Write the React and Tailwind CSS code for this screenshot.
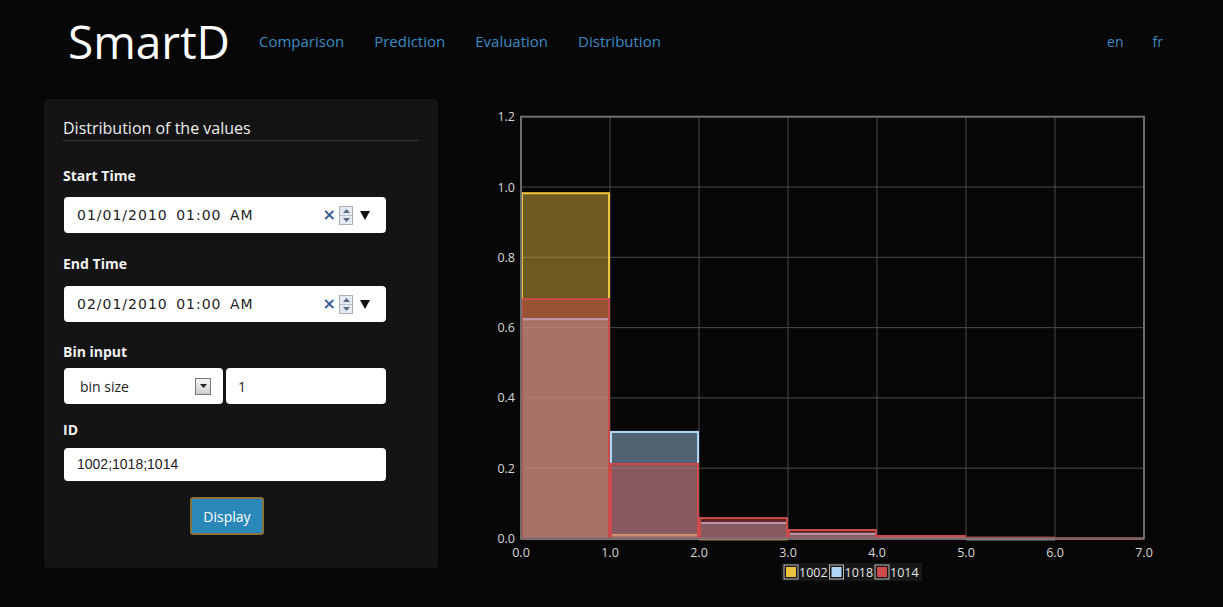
import React from "react";

const X0 = 521;
const UX = 89;
const Y0 = 538.5;
const UY = 351.5;
const xp = (v) => X0 + UX * v;
const yp = (v) => Y0 - UY * v;

const series = [
  { label: "1002", color: "#edc240", fill: "rgba(237,194,64,0.45)", data: [0.985, 0.013, 0.002, 0, 0, 0, 0] },
  { label: "1018", color: "#afd8f8", fill: "rgba(175,216,248,0.45)", data: [0.627, 0.306, 0.047, 0.016, 0.006, 0.002, 0] },
  { label: "1014", color: "#cb4b4b", fill: "rgba(203,75,75,0.45)", data: [0.684, 0.215, 0.061, 0.027, 0.01, 0.005, 0.003] },
];

function Chart() {
  const yTicks = [0, 0.2, 0.4, 0.6, 0.8, 1.0, 1.2];
  const xTicks = [0, 1, 2, 3, 4, 5, 6, 7];
  return (
    <svg width="700" height="490" viewBox="480 100 700 490" className="block" style={{ fontFamily: '"Open Sans", sans-serif' }}>
      {yTicks.slice(1, -1).map((t) => (
        <line key={"gy" + t} x1={X0} x2={xp(7)} y1={yp(t)} y2={yp(t)} stroke="#4a4a4a" strokeWidth="1" />
      ))}
      {xTicks.slice(1, -1).map((t) => (
        <line key={"gx" + t} x1={xp(t)} x2={xp(t)} y1={yp(1.2)} y2={Y0} stroke="#4a4a4a" strokeWidth="1" />
      ))}
      {series.map((s) =>
        s.data.map((v, i) =>
          v > 0 ? (
            <g key={s.label + i}>
              <rect x={xp(i)} y={yp(v)} width={UX} height={Y0 - yp(v)} fill={s.fill} />
              <rect x={xp(i) + 1} y={yp(v) + 1} width={UX - 2} height={Math.max(Y0 - yp(v) - 1, 0.5)} fill="none" stroke={s.color} strokeWidth="2" />
            </g>
          ) : null
        )
      )}
      <rect x={X0} y={yp(1.2)} width={UX * 7} height={UY * 1.2} fill="none" stroke="#6e6e6e" strokeWidth="2" />
      {yTicks.map((t) => (
        <text key={"ly" + t} x="515" y={yp(t) + 4.5} textAnchor="end" fontSize="12.5" fill="#d8d8d8">
          {t.toFixed(1)}
        </text>
      ))}
      {xTicks.map((t) => (
        <text key={"lx" + t} x={xp(t)} y="557" textAnchor="middle" fontSize="12.5" fill="#d8d8d8">
          {t.toFixed(1)}
        </text>
      ))}
      <rect x="781" y="563" width="141" height="18" fill="#1a1a1a" opacity="0.85" />
      {series.map((s, i) => {
        const bx = 784 + i * 45.5;
        return (
          <g key={"lg" + s.label}>
            <rect x={bx} y="565" width="14" height="14" fill="none" stroke="#bbbbbb" strokeWidth="1" />
            <rect x={bx + 2} y="567" width="10" height="10" fill={s.color} />
            <text x={bx + 15} y="576.5" fontSize="12.5" fill="#e4e4e4">
              {s.label}
            </text>
          </g>
        );
      })}
    </svg>
  );
}

function DateInput({ value }) {
  return (
    <div className="ml-px flex h-[36px] w-[322px] items-center rounded-[4px] bg-white pl-[13px] pr-[16px]">
      <span className="flex-1 text-[14px] tracking-[1px] text-[#222]" style={{ fontFamily: '"DejaVu Sans", sans-serif', wordSpacing: "3px" }}>
        {value}
      </span>
      <span className="text-[16px] font-bold leading-none text-[#3a5d8f]" style={{ fontFamily: '"DejaVu Sans", sans-serif' }}>
        ×
      </span>
      <span className="ml-[3px] flex h-[19px] w-[14px] flex-col border border-[#a9b0bd] bg-[#e6e9ef]">
        <span className="flex flex-1 items-center justify-center border-b border-[#b9bfca]">
          <svg width="7" height="4" viewBox="0 0 7 4"><path d="M0 4 L3.5 0 L7 4 Z" fill="#5a6b85" /></svg>
        </span>
        <span className="flex flex-1 items-center justify-center">
          <svg width="7" height="4" viewBox="0 0 7 4"><path d="M0 0 L3.5 4 L7 0 Z" fill="#5a6b85" /></svg>
        </span>
      </span>
      <svg className="ml-[7px]" width="10" height="9" viewBox="0 0 10 9"><path d="M0 0 L10 0 L5 9 Z" fill="#111" /></svg>
    </div>
  );
}

export default function App() {
  return (
    <div className="min-h-[607px] w-full bg-[#070707] text-white" style={{ fontFamily: '"Open Sans", sans-serif' }}>
      <header className="flex h-[82px] items-center pl-[68px]">
        <span className="text-[46px] leading-none text-white">SmartD</span>
        <nav className="ml-[29px] flex items-center gap-[30px] text-[15px] text-[#3d8bc4]">
          <span>Comparison</span>
          <span>Prediction</span>
          <span>Evaluation</span>
          <span>Distribution</span>
        </nav>
        <div className="ml-auto mr-[60px] flex gap-[29px] text-[14px] text-[#3d8bc4]">
          <span>en</span>
          <span>fr</span>
        </div>
      </header>
      <main className="mt-[17px] flex items-start">
        <section className="ml-[44px] h-[469px] w-[394px] rounded-[4px] bg-[#141414] pl-[19px] pr-[20px] pt-[18px]">
          <h2 className="border-b border-[#333] pb-px text-[16px] leading-[22px] text-[#eeeeee]">Distribution of the values</h2>
          <div className="mt-[25px] text-[14px] font-bold leading-[20px] text-[#f2f2f2]">Start Time</div>
          <div className="mt-[11px]">
            <DateInput value="01/01/2010 01:00 AM" />
          </div>
          <div className="mt-[21px] text-[14px] font-bold leading-[20px] text-[#f2f2f2]">End Time</div>
          <div className="mt-[12px]">
            <DateInput value="02/01/2010 01:00 AM" />
          </div>
          <div className="mt-[20px] text-[14px] font-bold leading-[20px] text-[#f2f2f2]">Bin input</div>
          <div className="ml-px mt-[6px] flex w-[322px] gap-[3px]">
            <div className="flex h-[36px] w-[159px] items-center rounded-[4px] bg-white pl-[16px] pr-[12px]">
              <span className="flex-1 text-[14px] text-[#222]">bin size</span>
              <span className="flex h-[17px] w-[16px] items-center justify-center border border-[#777] bg-gradient-to-b from-[#f4f4f4] to-[#cfcfcf]">
                <svg width="7" height="4" viewBox="0 0 7 4"><path d="M0 0 L7 0 L3.5 4 Z" fill="#222" /></svg>
              </span>
            </div>
            <div className="flex h-[36px] flex-1 items-center rounded-[4px] bg-white pl-[12px] text-[14px] text-[#222]">1</div>
          </div>
          <div className="mt-[16px] text-[14px] font-bold leading-[20px] text-[#f2f2f2]">ID</div>
          <div className="ml-px mt-[8px] flex h-[33px] w-[322px] items-center rounded-[4px] bg-white pl-[13px] text-[14px] text-[#222]" style={{ fontFamily: '"Liberation Sans", sans-serif' }}>
            1002;1018;1014
          </div>
          <div className="ml-[3px] mt-[16px] flex w-[322px] justify-center">
            <button className="h-[38px] w-[74px] rounded-[3px] border-2 border-[#85723a] bg-[#2a88b8] text-[14px] text-white">Display</button>
          </div>
        </section>
        <div className="ml-[42px] mt-px">
          <Chart />
        </div>
      </main>
    </div>
  );
}
